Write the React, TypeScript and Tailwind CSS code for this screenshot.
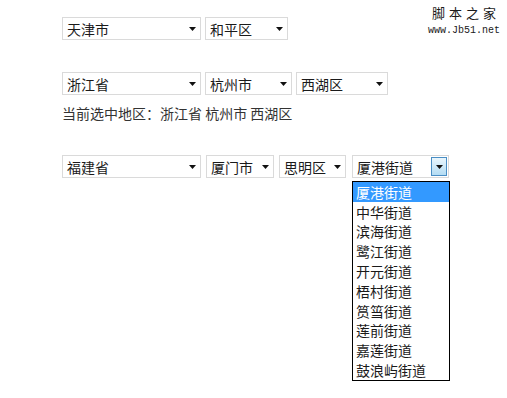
import React from "react";

const font = "font-['Microsoft_YaHei','Noto_Sans_CJK_SC',sans-serif]";

function Caret() {
  return (
    <svg width="7" height="4" viewBox="0 0 7 4" className="shrink-0">
      <path d="M0 0h7L3.5 4z" fill="#111" />
    </svg>
  );
}

function FakeSelect({ value, width, active = false }: { value: string; width: string; active?: boolean }) {
  return (
    <div
      className={`${width} h-[23px] flex items-center border border-[#dadada] bg-white pl-[4px] ${active ? "pr-[1px]" : "pr-[4px]"}`}
    >
      <span className="flex-1 text-[14px] leading-none text-[#1a1a1a] whitespace-nowrap">{value}</span>
      {active ? (
        <div className="w-[16px] h-[19px] flex items-center justify-center border border-[#4a8ec4] bg-gradient-to-b from-[#eaf6fd] to-[#b3dcf3]">
          <Caret />
        </div>
      ) : (
        <Caret />
      )}
    </div>
  );
}

const streets = ["厦港街道", "中华街道", "滨海街道", "鹭江街道", "开元街道", "梧村街道", "筼筜街道", "莲前街道", "嘉莲街道", "鼓浪屿街道"];

export default function App() {
  return (
    <div className={`relative w-[507px] h-[398px] bg-white ${font}`}>
      {/* logo */}
      <div className="absolute right-[7px] top-[5px] flex flex-col items-center">
        <span className="text-[13px] leading-[16px] tracking-[4px] text-[#1a1a1a] pl-[4px]">脚本之家</span>
        <span className="text-[10px] leading-[12px] mt-[4px] text-[#1a1a1a] font-['Liberation_Mono',monospace]">www.Jb51.net</span>
      </div>

      <div className="flex flex-col pl-[62px] pt-[17px]">
        <div className="flex gap-[4px]">
          <FakeSelect value="天津市" width="w-[139px]" />
          <FakeSelect value="和平区" width="w-[83px]" />
        </div>

        <div className="flex gap-[4px] mt-[32px]">
          <FakeSelect value="浙江省" width="w-[139px]" />
          <FakeSelect value="杭州市" width="w-[87px]" />
          <FakeSelect value="西湖区" width="w-[92px]" />
        </div>
        <p className="mt-[9px] text-[14px] leading-[18px] text-[#333]">当前选中地区：浙江省 杭州市 西湖区</p>

        <div className="flex gap-[5px] mt-[33px]">
          <FakeSelect value="福建省" width="w-[139px]" />
          <FakeSelect value="厦门市" width="w-[68px]" />
          <FakeSelect value="思明区" width="w-[67px]" />
          <div className="relative ml-[1px]">
            <FakeSelect value="厦港街道" width="w-[97px]" active />
            <ul className="absolute left-0 top-[26px] w-[98px] border border-black bg-white">
              {streets.map((s, i) => (
                <li
                  key={s}
                  className={`h-[19.8px] flex items-center pl-[3px] text-[14px] leading-none ${i === 0 ? "bg-[#3399ff] text-white" : "text-[#1a1a1a]"}`}
                >
                  {s}
                </li>
              ))}
            </ul>
          </div>
        </div>
      </div>
    </div>
  );
}
